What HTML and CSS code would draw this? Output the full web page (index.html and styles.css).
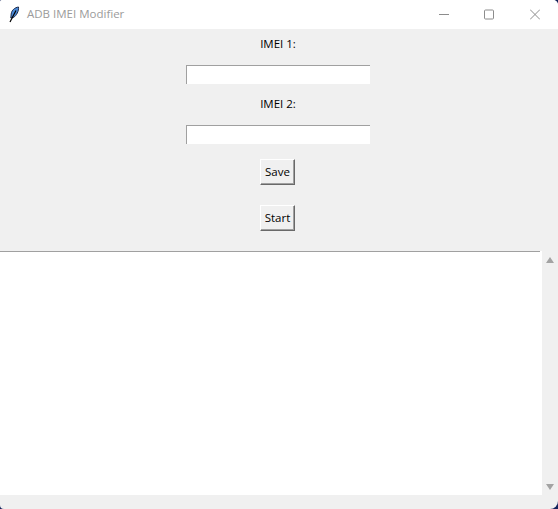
FILE: index.html
```html
<!DOCTYPE html>
<html lang="en">

<head>
    <meta charset="UTF-8">
    <title>ADB IMEI Modifier</title>
    <link rel="stylesheet" href="styles.css">
</head>

<body>
    <div class="window">
        <div class="titlebar">
            <svg class="app-icon" width="12" height="17" viewBox="0 0 12 17">
                <path d="M10.5 1 C7 1.5 3.6 4 3.2 8 L2.8 12 L5.5 11.5 C8.5 9.5 11 5 10.5 1 Z" fill="#4a8ad8" stroke="#1b2a4a" stroke-width="1"/>
                <path d="M8 4.5 L2 16" stroke="#000" stroke-width="1.2" fill="none"/>
            </svg>
            <span class="title">ADB IMEI Modifier</span>
            <div class="controls">
                <svg class="ctl-min" width="10" height="11" viewBox="0 0 10 11"><path d="M0 5.5 H10" stroke="#8c8c8c" fill="none"/></svg>
                <svg width="10" height="11" viewBox="0 0 10 11"><rect x="0.5" y="1" width="9" height="9" rx="1" stroke="#8c8c8c" fill="none"/></svg>
                <svg width="10" height="11" viewBox="0 0 10 11"><path d="M0 0.5 L10 10.5 M10 0.5 L0 10.5" stroke="#8c8c8c" fill="none"/></svg>
            </div>
        </div>

        <div class="form">
            <label class="field-label">IMEI 1:</label>
            <input class="entry" type="text">
            <label class="field-label">IMEI 2:</label>
            <input class="entry" type="text">
            <button class="btn btn-save">Save</button>
            <button class="btn btn-start">Start</button>
        </div>

        <div class="output">
            <div class="log">
                <div class="log-rule"></div>
            </div>
            <div class="scrollbar">
                <span class="arrow-up"></span>
                <span class="arrow-down"></span>
            </div>
        </div>
    </div>
</body>

</html>
```

FILE: styles.css
```css
/* General Page Styles */
html,
body {
    margin: 0;
    padding: 0;
    height: 100%;
    overflow: hidden;
}

body {
    background-color: #14235c;
    font-family: 'Open Sans', 'Noto Sans', sans-serif;
    font-size: 11.5px;
    color: #000;
}

/* Rounded corners show the desktop behind */
.window {
    display: flex;
    flex-direction: column;
    height: 509px;
    background-color: #f0f0f0;
    border-radius: 2px 5px 8px 4px;
    overflow: hidden;
}

/* Title bar */
.titlebar {
    display: flex;
    align-items: center;
    height: 29px;
    padding-left: 8px;
    background-color: #fff;
    flex-shrink: 0;
}

.app-icon {
    flex-shrink: 0;
}

.title {
    margin-left: 7px;
    padding-bottom: 2px;
    color: #9b9b9b;
    font-size: 11.5px;
}

.controls {
    display: flex;
    gap: 36px;
    margin-left: auto;
    padding-right: 18px;
}

.ctl-min {
    margin-right: -1px;
}

/* Form */
.form {
    display: flex;
    flex-direction: column;
    align-items: center;
    height: 222px;
    padding-right: 2px;
    flex-shrink: 0;
}

.field-label {
    height: 17px;
    line-height: 17px;
    margin-top: 6px;
    margin-bottom: 13px;
}

.entry {
    box-sizing: border-box;
    width: 184px;
    height: 19px;
    margin: 0 0 5px 0;
    padding: 0;
    background-color: #fff;
    border: none;
    border-top: 1px solid #a0a0a0;
    border-left: 1px solid #a0a0a0;
}

.btn {
    box-sizing: border-box;
    width: 35px;
    height: 26px;
    margin-right: 1px;
    padding: 0 0 2px;
    font-family: inherit;
    font-size: 11.5px;
    color: #000;
    background-color: #f0f0f0;
    border: none;
    border-top: 1px solid #fff;
    border-left: 1px solid #fff;
    border-right: 1px solid #696969;
    border-bottom: 1px solid #696969;
    box-shadow: inset -1px -1px 0 #a0a0a0;
}

.btn-save {
    margin-top: 10px;
}

.btn-start {
    margin-top: 20px;
}

/* Output area */
.output {
    display: flex;
    height: 244px;
    flex-shrink: 0;
}

.log {
    width: 542px;
    background-color: #fff;
}

.log-rule {
    width: 540px;
    height: 1px;
    background-color: #a0a0a0;
}

.scrollbar {
    display: flex;
    flex-direction: column;
    justify-content: space-between;
    align-items: center;
    width: 16px;
    padding: 6px 0 5px;
    box-sizing: border-box;
}

.arrow-up {
    border-left: 4px solid transparent;
    border-right: 4px solid transparent;
    border-bottom: 6px solid #a3a3a3;
}

.arrow-down {
    border-left: 4px solid transparent;
    border-right: 4px solid transparent;
    border-top: 6px solid #a3a3a3;
}
```
